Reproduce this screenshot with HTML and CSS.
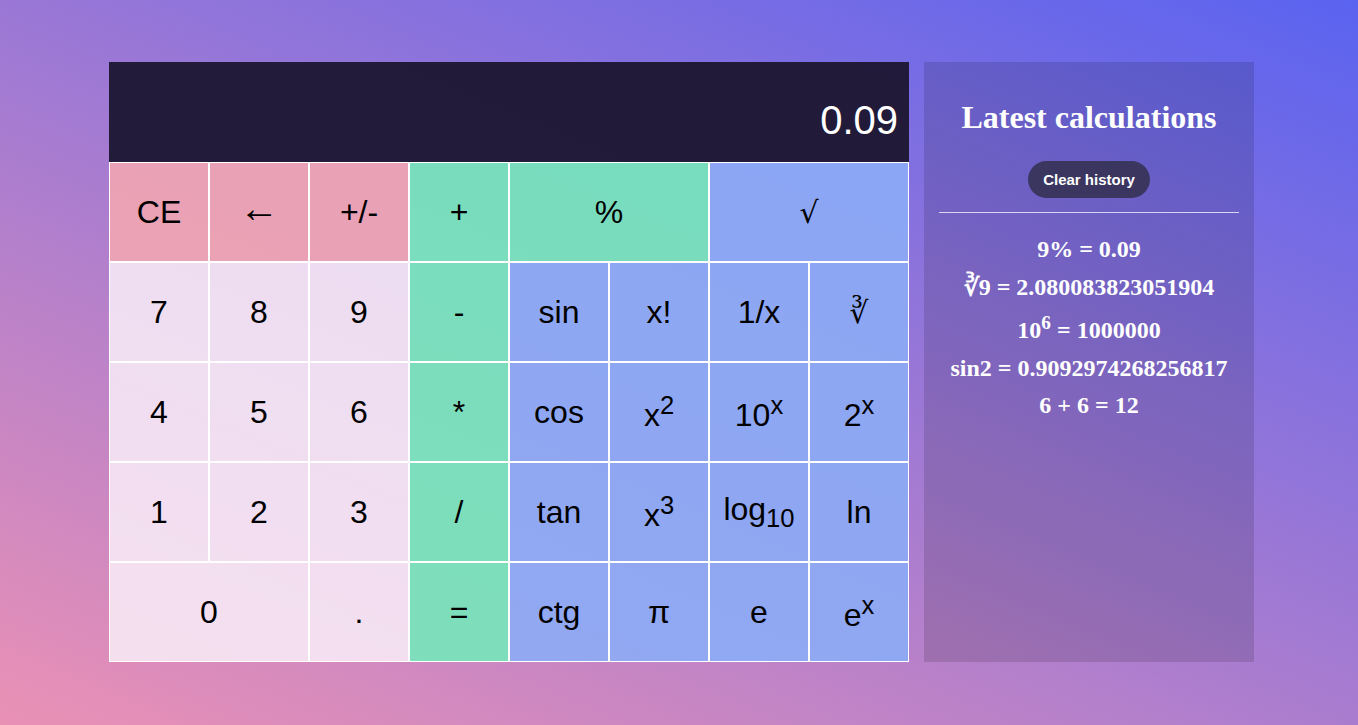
FILE: index.html
```html
<!DOCTYPE html>
<html lang="en">
<head>
<meta charset="utf-8">
<title>Calculator</title>
<link rel="stylesheet" href="styles.css">
</head>
<body>
<main class="page">
  <section class="calculator">
    <div class="display">0.09</div>
    <div class="keys">
      <button class="key key-pink">CE</button>
      <button class="key key-pink key-arrow">&larr;</button>
      <button class="key key-pink">+/-</button>
      <button class="key key-green">+</button>
      <button class="key key-green span-2">%</button>
      <button class="key key-blue span-2 key-root">&radic;</button>

      <button class="key key-num">7</button>
      <button class="key key-num">8</button>
      <button class="key key-num">9</button>
      <button class="key key-green">-</button>
      <button class="key key-blue">sin</button>
      <button class="key key-blue">x!</button>
      <button class="key key-blue">1/x</button>
      <button class="key key-blue key-root">&#8731;</button>

      <button class="key key-num">4</button>
      <button class="key key-num">5</button>
      <button class="key key-num">6</button>
      <button class="key key-green">*</button>
      <button class="key key-blue">cos</button>
      <button class="key key-blue">x<sup>2</sup></button>
      <button class="key key-blue">10<sup>x</sup></button>
      <button class="key key-blue">2<sup>x</sup></button>

      <button class="key key-num">1</button>
      <button class="key key-num">2</button>
      <button class="key key-num">3</button>
      <button class="key key-green">/</button>
      <button class="key key-blue">tan</button>
      <button class="key key-blue">x<sup>3</sup></button>
      <button class="key key-blue">log<sub>10</sub></button>
      <button class="key key-blue">ln</button>

      <button class="key key-num span-2">0</button>
      <button class="key key-num">.</button>
      <button class="key key-green">=</button>
      <button class="key key-blue">ctg</button>
      <button class="key key-blue">&pi;</button>
      <button class="key key-blue">e</button>
      <button class="key key-blue">e<sup>x</sup></button>
    </div>
  </section>

  <aside class="history">
    <h1 class="history-title">Latest calculations</h1>
    <button class="clear-btn">Clear history</button>
    <hr class="divider">
    <ul class="history-list">
      <li>9% = 0.09</li>
      <li>&#8731;9 = 2.080083823051904</li>
      <li>10<sup>6</sup> = 1000000</li>
      <li>sin2 = 0.9092974268256817</li>
      <li>6 + 6 = 12</li>
    </ul>
  </aside>
</main>
</body>
</html>
```

FILE: styles.css
```css
* {
  box-sizing: border-box;
}

html, body {
  margin: 0;
  height: 100%;
}

body {
  background: linear-gradient(23deg, #ea91b5 0%, #5a63f0 100%);
  font-family: "Liberation Sans", Arial, sans-serif;
  overflow: hidden;
}

.page {
  display: flex;
  align-items: flex-start;
  padding: 62px 0 0 109px;
  gap: 15px;
}

.calculator {
  width: 800px;
  display: flex;
  flex-direction: column;
}

.display {
  height: 100px;
  background: rgba(30, 24, 52, 0.97);
  color: #ffffff;
  font-family: "Liberation Sans", Arial, sans-serif;
  font-size: 40px;
  display: flex;
  align-items: flex-end;
  justify-content: flex-end;
  padding: 0 11px 19px 0;
  line-height: normal;
}

.keys {
  display: grid;
  grid-template-columns: repeat(8, 100px);
  grid-auto-rows: 100px;
}

.key {
  border: 1px solid #ffffff;
  margin: 0;
  padding: 0;
  font-family: "Liberation Sans", Arial, sans-serif;
  font-size: 32px;
  line-height: normal;
  color: #000000;
  text-align: center;
  cursor: pointer;
}

.key sup,
.key sub {
  font-size: 0.8em;
}

.key-arrow {
  font-size: 40px;
  line-height: 1;
  padding-bottom: 8px;
}

.key-root {
  font-family: "DejaVu Serif", "Liberation Serif", serif;
  font-size: 30px;
}

.span-2 {
  grid-column: span 2;
}

.key-pink {
  background: rgba(245, 168, 176, 0.86);
}

.key-green {
  background: rgba(118, 232, 186, 0.9);
}

.key-blue {
  background: rgba(140, 172, 246, 0.9);
}

.key-num {
  background: rgba(247, 234, 246, 0.88);
}

.history {
  width: 330px;
  height: 600px;
  background: rgba(0, 0, 0, 0.13);
  padding: 15px;
  display: flex;
  flex-direction: column;
  align-items: center;
  color: #ffffff;
  font-family: "Liberation Serif", "Times New Roman", serif;
}

.history-title {
  margin: 22px 0 25px;
  font-size: 32px;
  font-weight: bold;
  line-height: 37px;
}

.clear-btn {
  background: #3b3660;
  color: #ffffff;
  border: none;
  border-radius: 20px;
  font-family: "Liberation Sans", Arial, sans-serif;
  font-weight: bold;
  font-size: 15px;
  line-height: 17px;
  padding: 10px 15px;
  cursor: pointer;
}

.divider {
  width: 100%;
  margin: 14px 0 0;
  border: none;
  border-top: 1px solid rgba(235, 235, 245, 0.85);
}

.history-list {
  list-style: none;
  margin: 18px 0 0;
  padding: 0;
  text-align: center;
  font-size: 24px;
  font-weight: bold;
  line-height: 37.5px;
}

.history-list sup {
  font-size: 0.8em;
  line-height: 33px;
}
```
